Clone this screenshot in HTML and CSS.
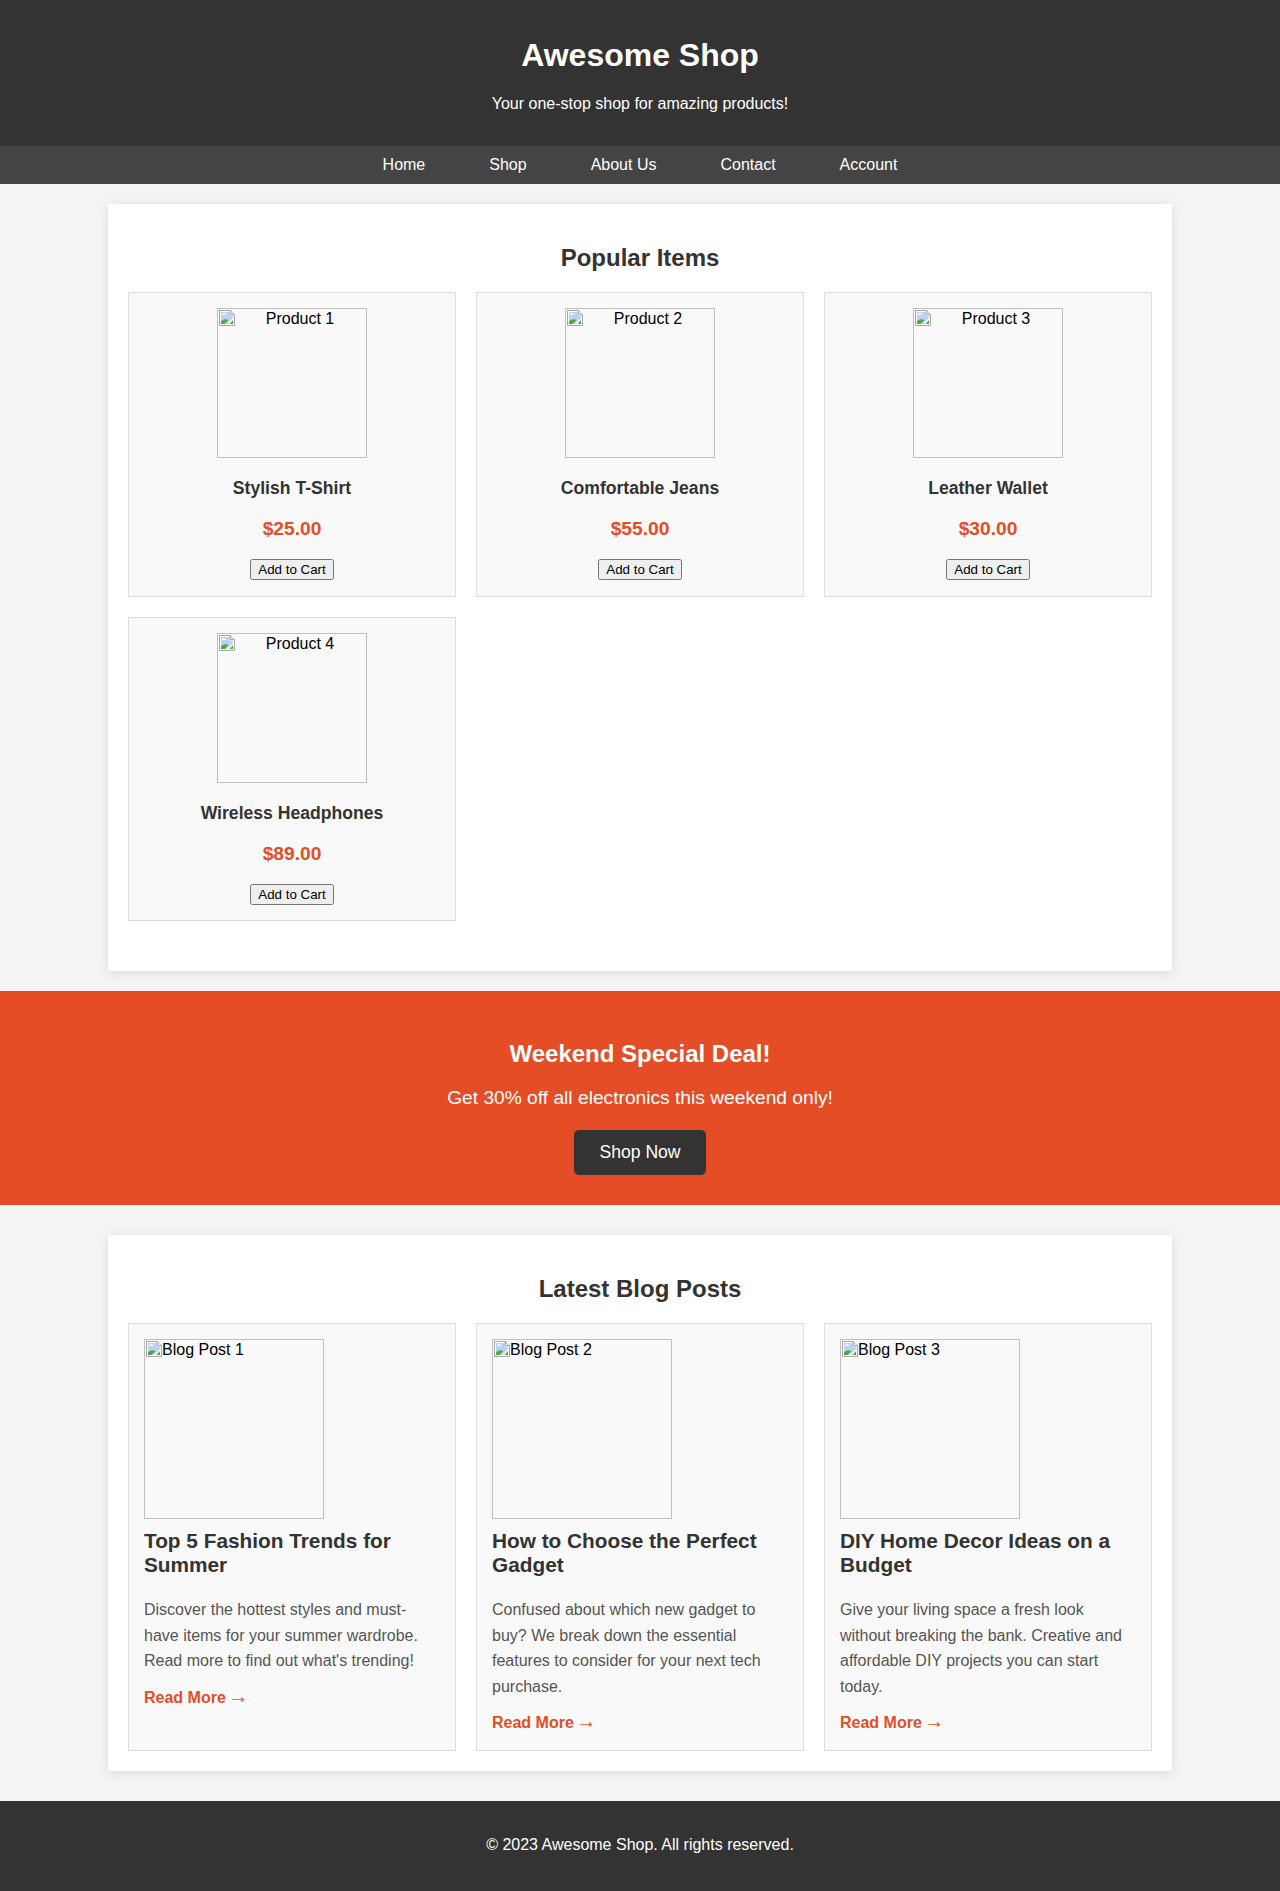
FILE: index.html
```html
<!DOCTYPE html>
<html lang="en">
<head>
    <meta charset="UTF-8">
    <meta name="viewport" content="width=device-width, initial-scale=1.0">
    <title>Awesome Shop</title>
    <link rel="stylesheet" href="styles.css">
</head>
<body>
    <svg class="sprite" width="0" height="0">
        <symbol id="broken" viewBox="0 0 16 16">
            <path d="M0.500 0.500H11.500L15.500 4.500V15.500H0.500Z" fill="#fff" stroke="#a8a8a8"/>
            <path d="M2 2H11V5.500H14V8L8 14H2Z" fill="#bcd2f7"/>
            <path d="M3 5c0-1.500 1.500-2 3-1.500c1.500 0 2 1.500 0.500 1.500Z" fill="#fff"/>
            <path d="M2 14V11.500C4 9 7 8.500 9.500 10L5.500 14Z" fill="#4fa83d"/>
            <path d="M10.500 14L14 10V14Z" fill="#4fa83d"/>
            <path d="M11.500 0.500V4.500H15.500" fill="#eee" stroke="#a8a8a8"/>
        </symbol>
    </svg>

    <header class="site-header">
        <h1>Awesome Shop</h1>
        <p>Your one-stop shop for amazing products!</p>
    </header>

    <nav class="site-nav">
        <a href="#">Home</a>
        <a href="#">Shop</a>
        <a href="#">About Us</a>
        <a href="#">Contact</a>
        <a href="#">Account</a>
    </nav>

    <!-- Popular items -->
    <section class="panel panel-products">
        <h2>Popular Items</h2>
        <div class="card-grid">
            <div class="product">
                <div class="img-box product-img"><svg class="img-icon"><use href="#broken"/></svg>Product 1</div>
                <h3>Stylish T-Shirt</h3>
                <p class="price">$25.00</p>
                <button>Add to Cart</button>
            </div>
            <div class="product">
                <div class="img-box product-img"><svg class="img-icon"><use href="#broken"/></svg>Product 2</div>
                <h3>Comfortable Jeans</h3>
                <p class="price">$55.00</p>
                <button>Add to Cart</button>
            </div>
            <div class="product">
                <div class="img-box product-img"><svg class="img-icon"><use href="#broken"/></svg>Product 3</div>
                <h3>Leather Wallet</h3>
                <p class="price">$30.00</p>
                <button>Add to Cart</button>
            </div>
            <div class="product">
                <div class="img-box product-img"><svg class="img-icon"><use href="#broken"/></svg>Product 4</div>
                <h3>Wireless Headphones</h3>
                <p class="price">$89.00</p>
                <button>Add to Cart</button>
            </div>
        </div>
    </section>

    <!-- Promo banner -->
    <section class="promo">
        <h2>Weekend Special Deal!</h2>
        <p>Get 30% off all electronics this weekend only!</p>
        <a href="#" class="promo-btn">Shop Now</a>
    </section>

    <!-- Blog posts -->
    <section class="panel panel-blog">
        <h2>Latest Blog Posts</h2>
        <div class="card-grid">
            <article class="post">
                <div class="img-box post-img"><svg class="img-icon"><use href="#broken"/></svg>Blog Post 1</div>
                <h3>Top 5 Fashion Trends for Summer</h3>
                <p>Discover the hottest styles and must-have items for your summer wardrobe. Read more to find out what's trending!</p>
                <a href="#" class="read-more">Read More <span class="arrow">→</span></a>
            </article>
            <article class="post">
                <div class="img-box post-img"><svg class="img-icon"><use href="#broken"/></svg>Blog Post 2</div>
                <h3>How to Choose the Perfect Gadget</h3>
                <p>Confused about which new gadget to buy? We break down the essential features to consider for your next tech purchase.</p>
                <a href="#" class="read-more">Read More <span class="arrow">→</span></a>
            </article>
            <article class="post">
                <div class="img-box post-img"><svg class="img-icon"><use href="#broken"/></svg>Blog Post 3</div>
                <h3>DIY Home Decor Ideas on a Budget</h3>
                <p>Give your living space a fresh look without breaking the bank. Creative and affordable DIY projects you can start today.</p>
                <a href="#" class="read-more">Read More <span class="arrow">→</span></a>
            </article>
        </div>
    </section>

    <footer class="site-footer">
        <p>© 2023 Awesome Shop. All rights reserved.</p>
    </footer>
</body>
</html>
```

FILE: styles.css
```css
/* Global styles */
body {
    font-family: "Liberation Sans", Arial, sans-serif;
    background-color: #f4f4f4;
    color: #000;
    margin: 0;
    font-size: 16px;
    line-height: 18px;
}

.sprite {
    display: block;
}

/* Header */
.site-header {
    background-color: #333;
    color: #fff;
    text-align: center;
    padding: 37px 20px 33px;
}

.site-header h1 {
    font-size: 32px;
    line-height: 37px;
    margin: 0 0 21px;
}

.site-header p {
    line-height: 18px;
    margin: 0;
}

/* Nav */
.site-nav {
    background-color: #444;
    display: flex;
    justify-content: center;
    gap: 64px;
    height: 38px;
    line-height: 37px;
}

.site-nav a {
    color: #fff;
    text-decoration: none;
}

/* Panels */
.panel {
    background-color: #fff;
    width: 1024px;
    margin: 20px auto;
    padding: 20px;
    box-shadow: 0 2px 10px rgba(0, 0, 0, 0.1);
}

.panel h2 {
    color: #333;
    font-size: 24px;
    line-height: 28px;
    text-align: center;
    margin: 20px 0 20px;
}

.panel-products {
    padding-bottom: 50px;
}

.panel-blog {
    margin-top: 30px;
    margin-bottom: 30px;
}

.card-grid {
    display: grid;
    grid-template-columns: repeat(3, 1fr);
    gap: 20px;
}

/* Broken image placeholders */
.img-box {
    box-sizing: border-box;
    border: 1px solid #c0c0c0;
    line-height: 18px;
    padding: 1px;
}

.img-icon {
    width: 16px;
    height: 16px;
    float: left;
}

.product-img {
    width: 150px;
    height: 150px;
    margin: 0 auto;
}

.post-img {
    width: 180px;
    height: 180px;
}

/* Product cards */
.product {
    background-color: #f9f9f9;
    border: 1px solid #ddd;
    padding: 15px 15px 15.5px;
    text-align: center;
}

.product h3 {
    color: #333;
    font-size: 17.6px;
    line-height: 20px;
    margin: 20px 0;
}

.price {
    color: #e44d26;
    font-size: 19.2px;
    font-weight: bold;
    line-height: 22px;
    margin: 0 0 19px;
}

.product button {
    display: block;
    margin: 0 auto;
    font-family: "Liberation Sans", Arial, sans-serif;
    font-size: 13.333px;
}

/* Promo banner */
.promo {
    background-color: #e44d26;
    color: #fff;
    text-align: center;
    padding: 49px 20px 30px;
}

.promo h2 {
    font-size: 24px;
    line-height: 28px;
    margin: 0 0 19px;
}

.promo p {
    font-size: 19.2px;
    line-height: 22px;
    margin: 0 0 21px;
}

.promo-btn {
    display: inline-block;
    background-color: #333;
    color: #fff;
    font-size: 17.6px;
    line-height: 21px;
    padding: 12px 25px;
    border-radius: 5px;
    text-decoration: none;
}

/* Blog cards */
.post {
    background-color: #f9f9f9;
    border: 1px solid #ddd;
    padding: 15px 15px 14px;
    line-height: 25.6px;
}

.post .img-box {
    line-height: 18px;
}

.post h3 {
    color: #333;
    font-size: 20.8px;
    line-height: 24px;
    margin: 10px 0 20px;
}

.post p {
    color: #555;
    margin: 0 0 10px;
}

.read-more {
    color: #e44d26;
    font-weight: bold;
    text-decoration: none;
}

.arrow {
    font-size: 20px;
    font-weight: normal;
    margin-left: -2px;
}

/* Footer */
.site-footer {
    background-color: #333;
    color: #fff;
    text-align: center;
    padding: 34px 20px 36px;
    margin-bottom: 1px;
}

.site-footer p {
    line-height: 20px;
    margin: 0;
}
```
